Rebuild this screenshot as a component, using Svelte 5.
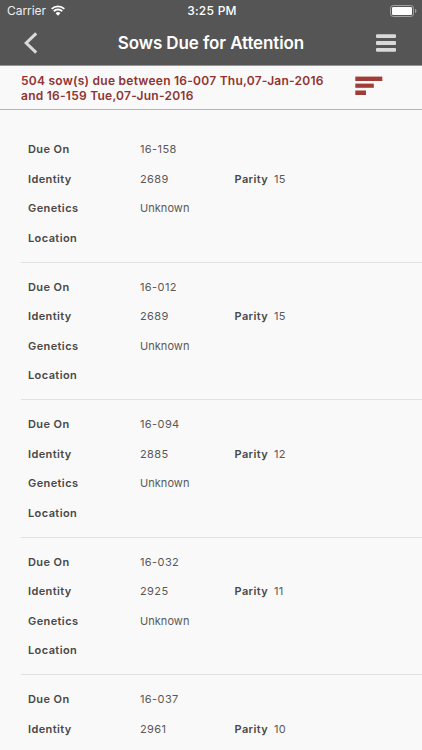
<script lang="ts">
  type Sow = { dueOn: string; identity: string; parity: number; genetics?: string; location?: string };

  const summary = ['504 sow(s) due between 16-007 Thu,07-Jan-2016', 'and 16-159 Tue,07-Jun-2016'];
  const sows: Sow[] = [
    { dueOn: '16-158', identity: '2689', parity: 15, genetics: 'Unknown' },
    { dueOn: '16-012', identity: '2689', parity: 15, genetics: 'Unknown' },
    { dueOn: '16-094', identity: '2885', parity: 12, genetics: 'Unknown' },
    { dueOn: '16-032', identity: '2925', parity: 11, genetics: 'Unknown' },
    { dueOn: '16-037', identity: '2961', parity: 10, genetics: 'Unknown' },
  ];
</script>

<div class="screen">
  <header>
    <div class="status">
      <div class="carrier">
        <span>Carrier</span>
        <svg class="wifi" width="14" height="11" viewBox="0 0 14 11" aria-hidden="true">
          <path d="M0.7 3.9a9 9 0 0 1 12.6 0M2.8 6.2a6 6 0 0 1 8.4 0" />
          <path class="dot" d="M7 10.7L4.6 8.3a3.4 3.4 0 0 1 4.8 0z" />
        </svg>
      </div>
      <span class="time">3:25 PM</span>
      <svg class="battery" width="27" height="12" viewBox="0 0 27 12" aria-hidden="true">
        <rect class="shell" x="0.5" y="0.5" width="23" height="11" rx="2.8" />
        <rect class="charge" x="2" y="2" width="20" height="8" rx="1.2" />
        <path class="cap" d="M25 4v4c0.9-.3 1.4-1 1.4-2s-.5-1.7-1.4-2z" />
      </svg>
    </div>
    <div class="nav">
      <button aria-label="Back">
        <svg width="14" height="22" viewBox="0 0 14 22"><path d="M12.2 1.4L2.2 11l10 9.6" /></svg>
      </button>
      <h1>Sows Due for Attention</h1>
      <button class="menu" aria-label="Menu">
        <svg width="20" height="18" viewBox="0 0 20 18">
          <rect y="0.2" width="20" height="3.8" rx="1" />
          <rect y="7.1" width="20" height="3.8" rx="1" />
          <rect y="14" width="20" height="3.8" rx="1" />
        </svg>
      </button>
    </div>
  </header>

  <section class="summary">
    <p>
      {#each summary as line}
        <span>{line}</span>
      {/each}
    </p>
    <button aria-label="Sort">
      <svg width="28" height="20" viewBox="0 0 28 20">
        <rect x="0.3" y="0.6" width="27" height="4.4" />
        <rect x="0.3" y="7.6" width="18.5" height="4.2" />
        <rect x="0.3" y="14.5" width="10.7" height="4.5" />
      </svg>
    </button>
  </section>

  <ul>
    {#each sows as sow}
      <li>
        <dl>
          <div><dt>Due On</dt><dd>{sow.dueOn}</dd></div>
          <div>
            <dt>Identity</dt><dd>{sow.identity}</dd>
            <dt>Parity</dt><dd>{sow.parity}</dd>
          </div>
          <div><dt>Genetics</dt><dd class="word">{sow.genetics ?? ''}</dd></div>
          <div><dt>Location</dt><dd class="word">{sow.location ?? ''}</dd></div>
        </dl>
      </li>
    {/each}
  </ul>
</div>

<style>
  :global(body) {
    overflow: hidden;
  }
  .screen {
    height: 750px;
    overflow: hidden;
    background: #f9f9f9;
    color: #595959;
    font-family: Inter, 'Liberation Sans', sans-serif;
  }
  button {
    display: flex;
    padding: 0;
    border: 0;
    background: none;
  }
  svg {
    display: block;
  }
  header {
    box-sizing: border-box;
    height: 66px;
    background: #555;
    border-bottom: 1px solid #969696;
    color: #fff;
  }
  .status {
    display: grid;
    grid-template-columns: 1fr auto 1fr;
    align-items: center;
    height: 21px;
    padding: 0 5px 0 7px;
    font-size: 12px;
  }
  .carrier {
    display: flex;
    align-items: center;
    gap: 5px;
    color: #eee;
    letter-spacing: -0.05px;
  }
  .wifi {
    fill: none;
    stroke: #fff;
    stroke-width: 1.9;
  }
  .dot {
    fill: #fff;
    stroke: none;
  }
  .time {
    font-weight: 500;
    letter-spacing: 0.25px;
  }
  .battery {
    justify-self: end;
  }
  .shell {
    fill: none;
    stroke: #a2a2a2;
  }
  .charge {
    fill: #fff;
  }
  .cap {
    fill: #a2a2a2;
  }
  .nav {
    display: grid;
    grid-template-columns: 14px 1fr 20px;
    align-items: center;
    height: 44px;
    padding: 0 26px 0 24px;
  }
  .nav button svg {
    fill: none;
    stroke: #d9d9d9;
    stroke-width: 3.1;
  }
  .nav .menu svg {
    fill: #d9d9d9;
    stroke: none;
  }
  h1 {
    margin: 0;
    padding-left: 8px;
    font-size: 17px;
    font-weight: 600;
    letter-spacing: -0.1px;
    text-align: center;
  }
  .summary {
    box-sizing: border-box;
    display: flex;
    justify-content: space-between;
    height: 44px;
    padding: 8px 39px 0 21px;
    border-bottom: 1px solid #b5b5b5;
  }
  .summary p {
    margin: 0;
    color: #8f3432;
    font-size: 12px;
    font-weight: 600;
    line-height: 14.5px;
    letter-spacing: 0.25px;
  }
  .summary p span {
    display: block;
    white-space: nowrap;
  }
  .summary button {
    align-self: flex-start;
    margin-top: 2px;
  }
  .summary svg {
    fill: #a23c36;
  }
  ul {
    margin: 0;
    padding: 15px 0 0 21px;
    list-style: none;
  }
  li {
    box-sizing: border-box;
    height: 137.5px;
    padding: 9.25px 0 0 7px;
    border-bottom: 1px solid #e1e1e1;
  }
  dl {
    margin: 0;
    font-size: 11px;
    letter-spacing: 0.4px;
  }
  dl div {
    display: grid;
    grid-template-columns: 112px 94.5px 39.5px 1fr;
    align-items: center;
    height: 29.5px;
    line-height: 14px;
  }
  dt {
    font-weight: 600;
    color: #484848;
  }
  dd {
    margin: 0;
  }
  .word {
    letter-spacing: 0.05px;
  }
</style>
